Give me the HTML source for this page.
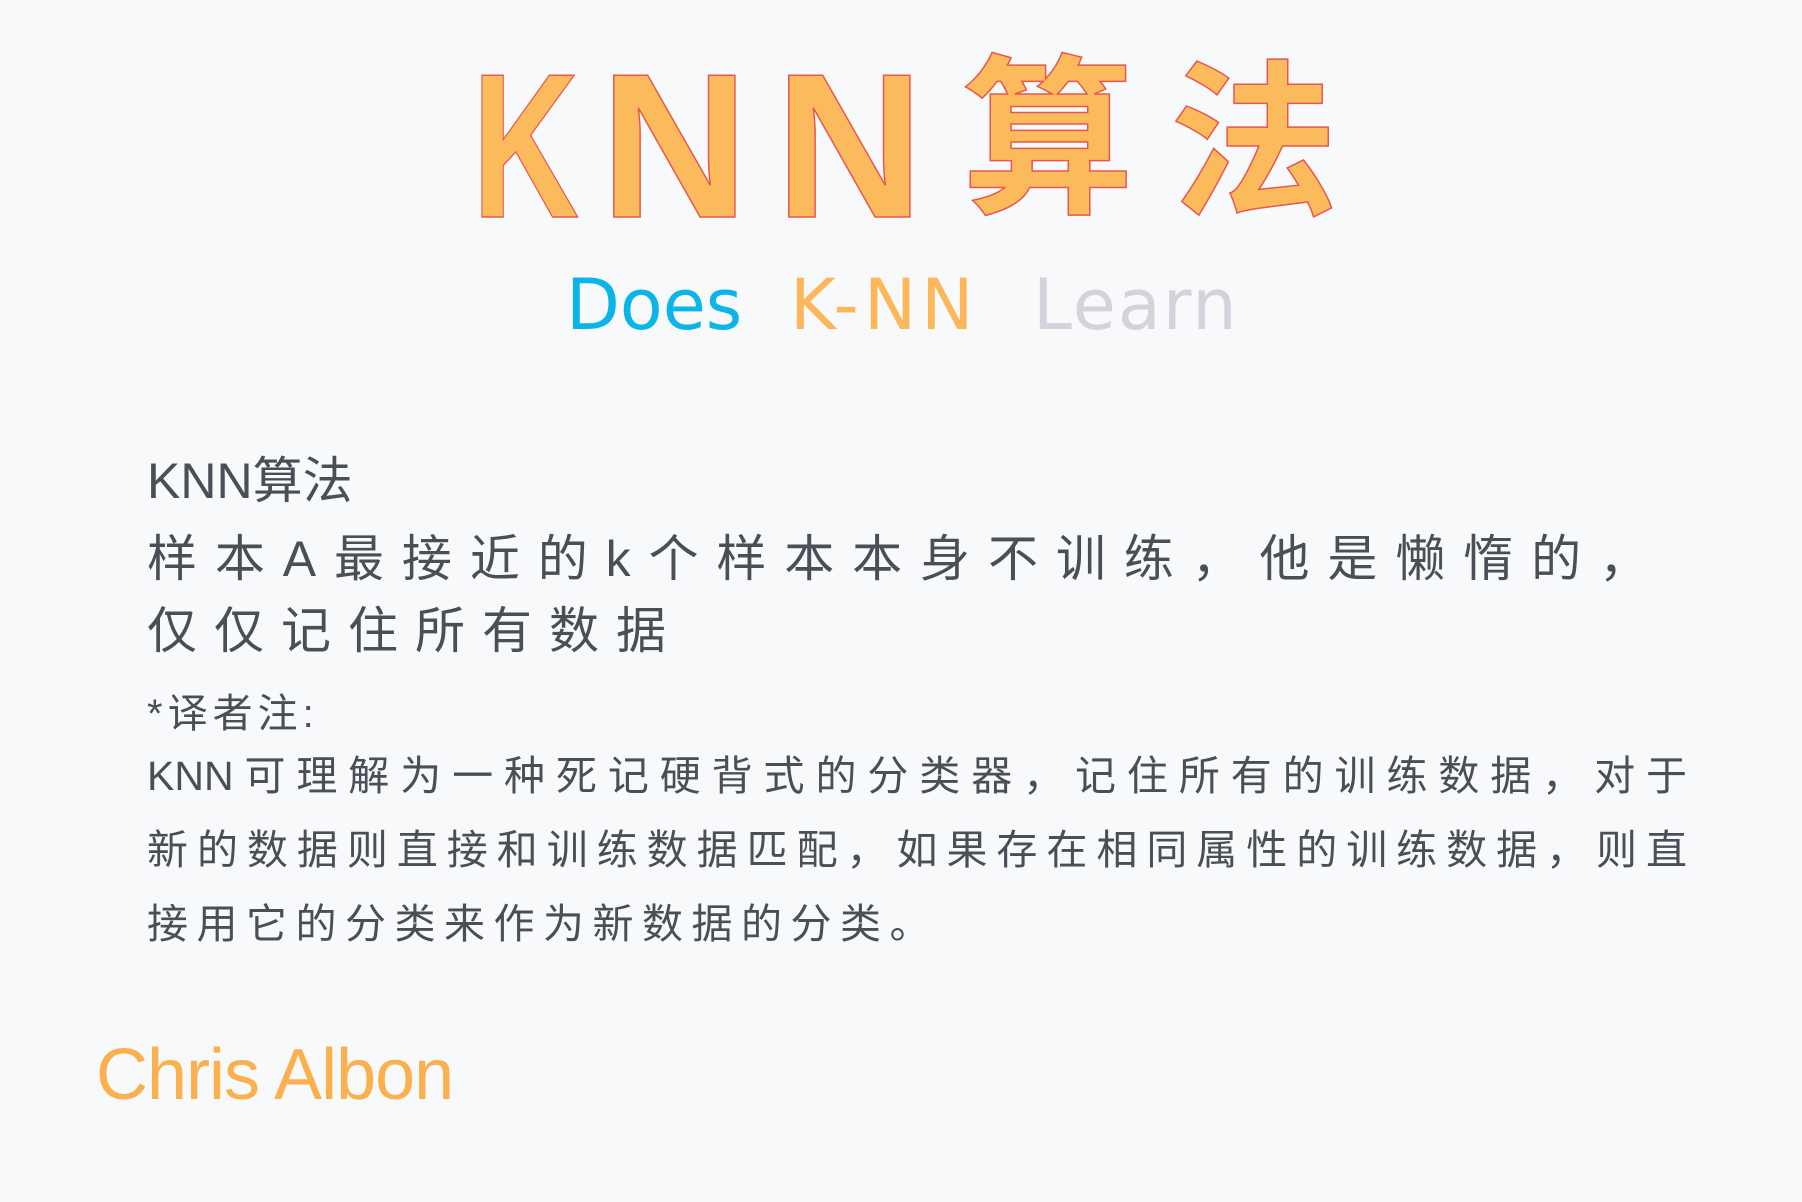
<!DOCTYPE html>
<html><head><meta charset="utf-8"><style>
html,body{margin:0;padding:0}
body{width:1802px;height:1202px;background:#f8f9fb;position:relative;overflow:hidden;font-family:"Liberation Sans","Noto Sans CJK SC",sans-serif}
.t{position:absolute;white-space:nowrap}
.big{font-family:"Liberation Sans","Noto Sans CJK SC",sans-serif;font-weight:bold;color:#fbba5c;-webkit-text-stroke:1.5px #e8564f;font-size:206px;line-height:1}
.sub{font-size:70px;line-height:1;top:270px;font-family:"DejaVu Sans","Liberation Sans",sans-serif}
.body{color:#4a4f57;font-size:50px;line-height:1}
.j{text-align:justify;text-align-last:justify}
.p{color:#4a4f57;font-size:41px;line-height:1;left:147px;width:1540px}
</style></head><body>
<div class="t big" style="left:472px;top:43px;transform:scaleX(0.72);transform-origin:left top;">K</div>
<div class="t big" style="left:600px;top:43px;">N</div>
<div class="t big" style="left:775px;top:43px;">N</div>
<div class="t big" style="left:962px;top:55px;font-size:172px;">算</div>
<div class="t big" style="left:1170px;top:60px;font-size:168px;">法</div>

<div class="t sub" style="left:566px;color:#0bb5e8;">Does</div>
<div class="t sub" style="left:790px;color:#fbb75a;letter-spacing:5px;">K-NN</div>
<div class="t sub" style="left:1033px;color:#d3d3de;letter-spacing:2px;">Learn</div>

<div class="t body" style="left:147px;top:456px;">KNN算法</div>
<div class="t body j" style="left:147px;top:534px;width:1502px;">样本A最接近的k个样本本身不训练，他是懒惰的，</div>
<div class="t body" style="left:147px;top:606px;letter-spacing:17px;">仅仅记住所有数据</div>
<div class="t" style="left:147px;top:681px;font-size:40px;color:#4a4f57;letter-spacing:5px;">*译者注:</div>
<div class="t p j" style="top:756px;">KNN可理解为一种死记硬背式的分类器，记住所有的训练数据，对于</div>
<div class="t p j" style="top:830px;">新的数据则直接和训练数据匹配，如果存在相同属性的训练数据，则直</div>
<div class="t p" style="top:904px;letter-spacing:8.5px;">接用它的分类来作为新数据的分类。</div>

<div class="t" style="left:96px;top:1034px;font-size:72px;color:#fbb04f;letter-spacing:-1px;font-family:'Liberation Sans',sans-serif;">Chris Albon</div>
</body></html>
